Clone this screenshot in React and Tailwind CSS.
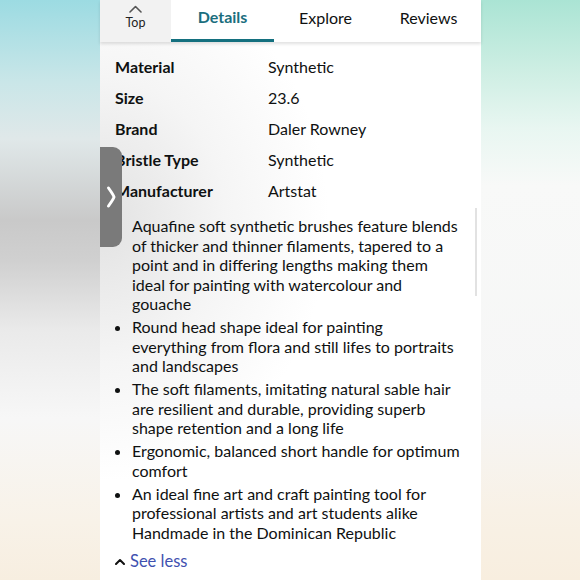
import React from 'react';

const rows = [
  ['Material', 'Synthetic'],
  ['Size', '23.6'],
  ['Brand', 'Daler Rowney'],
  ['Bristle Type', 'Synthetic'],
  ['Manufacturer', 'Artstat'],
];

// lines kept as in the listing so the wrap matches
const bullets = [
  ['Aquafine soft synthetic brushes feature blends', 'of thicker and thinner filaments, tapered to a', 'point and in differing lengths making them', 'ideal for painting with watercolour and', 'gouache'],
  ['Round head shape ideal for painting', 'everything from flora and still lifes to portraits', 'and landscapes'],
  ['The soft filaments, imitating natural sable hair', 'are resilient and durable, providing superb', 'shape retention and a long life'],
  ['Ergonomic, balanced short handle for optimum', 'comfort'],
  ['An ideal fine art and craft painting tool for', 'professional artists and art students alike', 'Handmade in the Dominican Republic'],
];

function Tab({ label, active }) {
  return (
    <div
      className={`w-[103px] flex items-center justify-center text-[16px] ${
        active ? 'font-bold text-[#1b6e7e] border-b-[3px] border-[#14707f] pb-[6px]' : 'text-[#0f1111] pb-[6px]'
      }`}
    >
      {label}
    </div>
  );
}

export default function App() {
  return (
    <div className="w-[580px] h-[580px] flex overflow-hidden font-['Lato','Noto_Sans',sans-serif] text-[#0f1111]">
      <div className="w-[100px] bg-[linear-gradient(to_bottom,#9cdbe2_0%,#c9e6e8_14%,#e0e8e9_24%,#c9c9c9_38%,#d0d0d0_45%,#eaeaea_57%,#f7f7f7_72%,#f8f2e8_90%,#f7eee0_100%)]" />

      <div className="relative w-[381px] flex flex-col bg-[radial-gradient(ellipse_60%_45%_at_0%_38%,#e2e2e2_0%,#f5f5f5_55%,#ffffff_100%)]">
        {/* tab bar */}
        <div className="h-[42px] flex bg-white shadow-[0_2px_3px_rgba(0,0,0,0.12)] z-10">
          <div className="w-[71px] bg-[#f2f2f2] flex flex-col items-center pt-[5px]">
            <svg width="13" height="8" viewBox="0 0 13 8" fill="none">
              <path d="M1 7 L6.5 1.5 L12 7" stroke="#555" strokeWidth="1.6" strokeLinecap="round" strokeLinejoin="round" />
            </svg>
            <span className="text-[12.5px] leading-[14px] mt-[3px] text-[#222]">Top</span>
          </div>
          <Tab label="Details" active />
          <Tab label="Explore" />
          <Tab label="Reviews" />
        </div>

        <div className="pl-[15px] pr-[10px] pt-[9px]">
          <div className="flex flex-col">
            {rows.map(([k, v]) => (
              <div key={k} className="h-[31px] flex items-center text-[16px]">
                <span className="w-[153px] font-bold">{k}</span>
                <span>{v}</span>
              </div>
            ))}
          </div>

          <ul className="list-disc pl-[17px] mt-[10px] text-[16px] leading-[19.5px]">
            {bullets.map((lines) => (
              <li key={lines[0]} className="mb-[3.5px]">
                {lines.map((l, i) => (
                  <span key={i} className="block whitespace-nowrap">{l}</span>
                ))}
              </li>
            ))}
          </ul>

          <div className="flex items-center mt-[9px] h-[20px]">
            <svg width="10" height="7" viewBox="0 0 10 7" fill="none" className="mr-[5px]">
              <path d="M1 6 L5 2 L9 6" stroke="#111" strokeWidth="2" strokeLinecap="round" strokeLinejoin="round" />
            </svg>
            <span className="text-[16.5px] text-[#3f51b0]">See less</span>
          </div>
        </div>

        {/* scroll indicator */}
        <div className="absolute right-[4px] top-[208px] w-[2px] h-[88px] bg-[#e2e2e2]" />

        {/* side drawer handle */}
        <div className="absolute left-0 top-[147px] w-[22px] h-[100px] bg-[#7a7a7a] rounded-r-[9px] flex items-center justify-center">
          <svg width="10" height="24" viewBox="0 0 10 24" fill="none">
            <path d="M2.5 3 Q7.5 10 8 12 Q7.5 14 2.5 21" stroke="#fff" strokeWidth="3" strokeLinecap="round" strokeLinejoin="round" />
          </svg>
        </div>
      </div>

      <div className="w-[99px] bg-[linear-gradient(to_bottom,#aae4d4_0%,#cdeee3_12%,#e8f6f1_22%,#f8f9f8_32%,#f6f6f6_70%,#f8f1e6_88%,#f8eedf_100%)]" />
    </div>
  );
}
